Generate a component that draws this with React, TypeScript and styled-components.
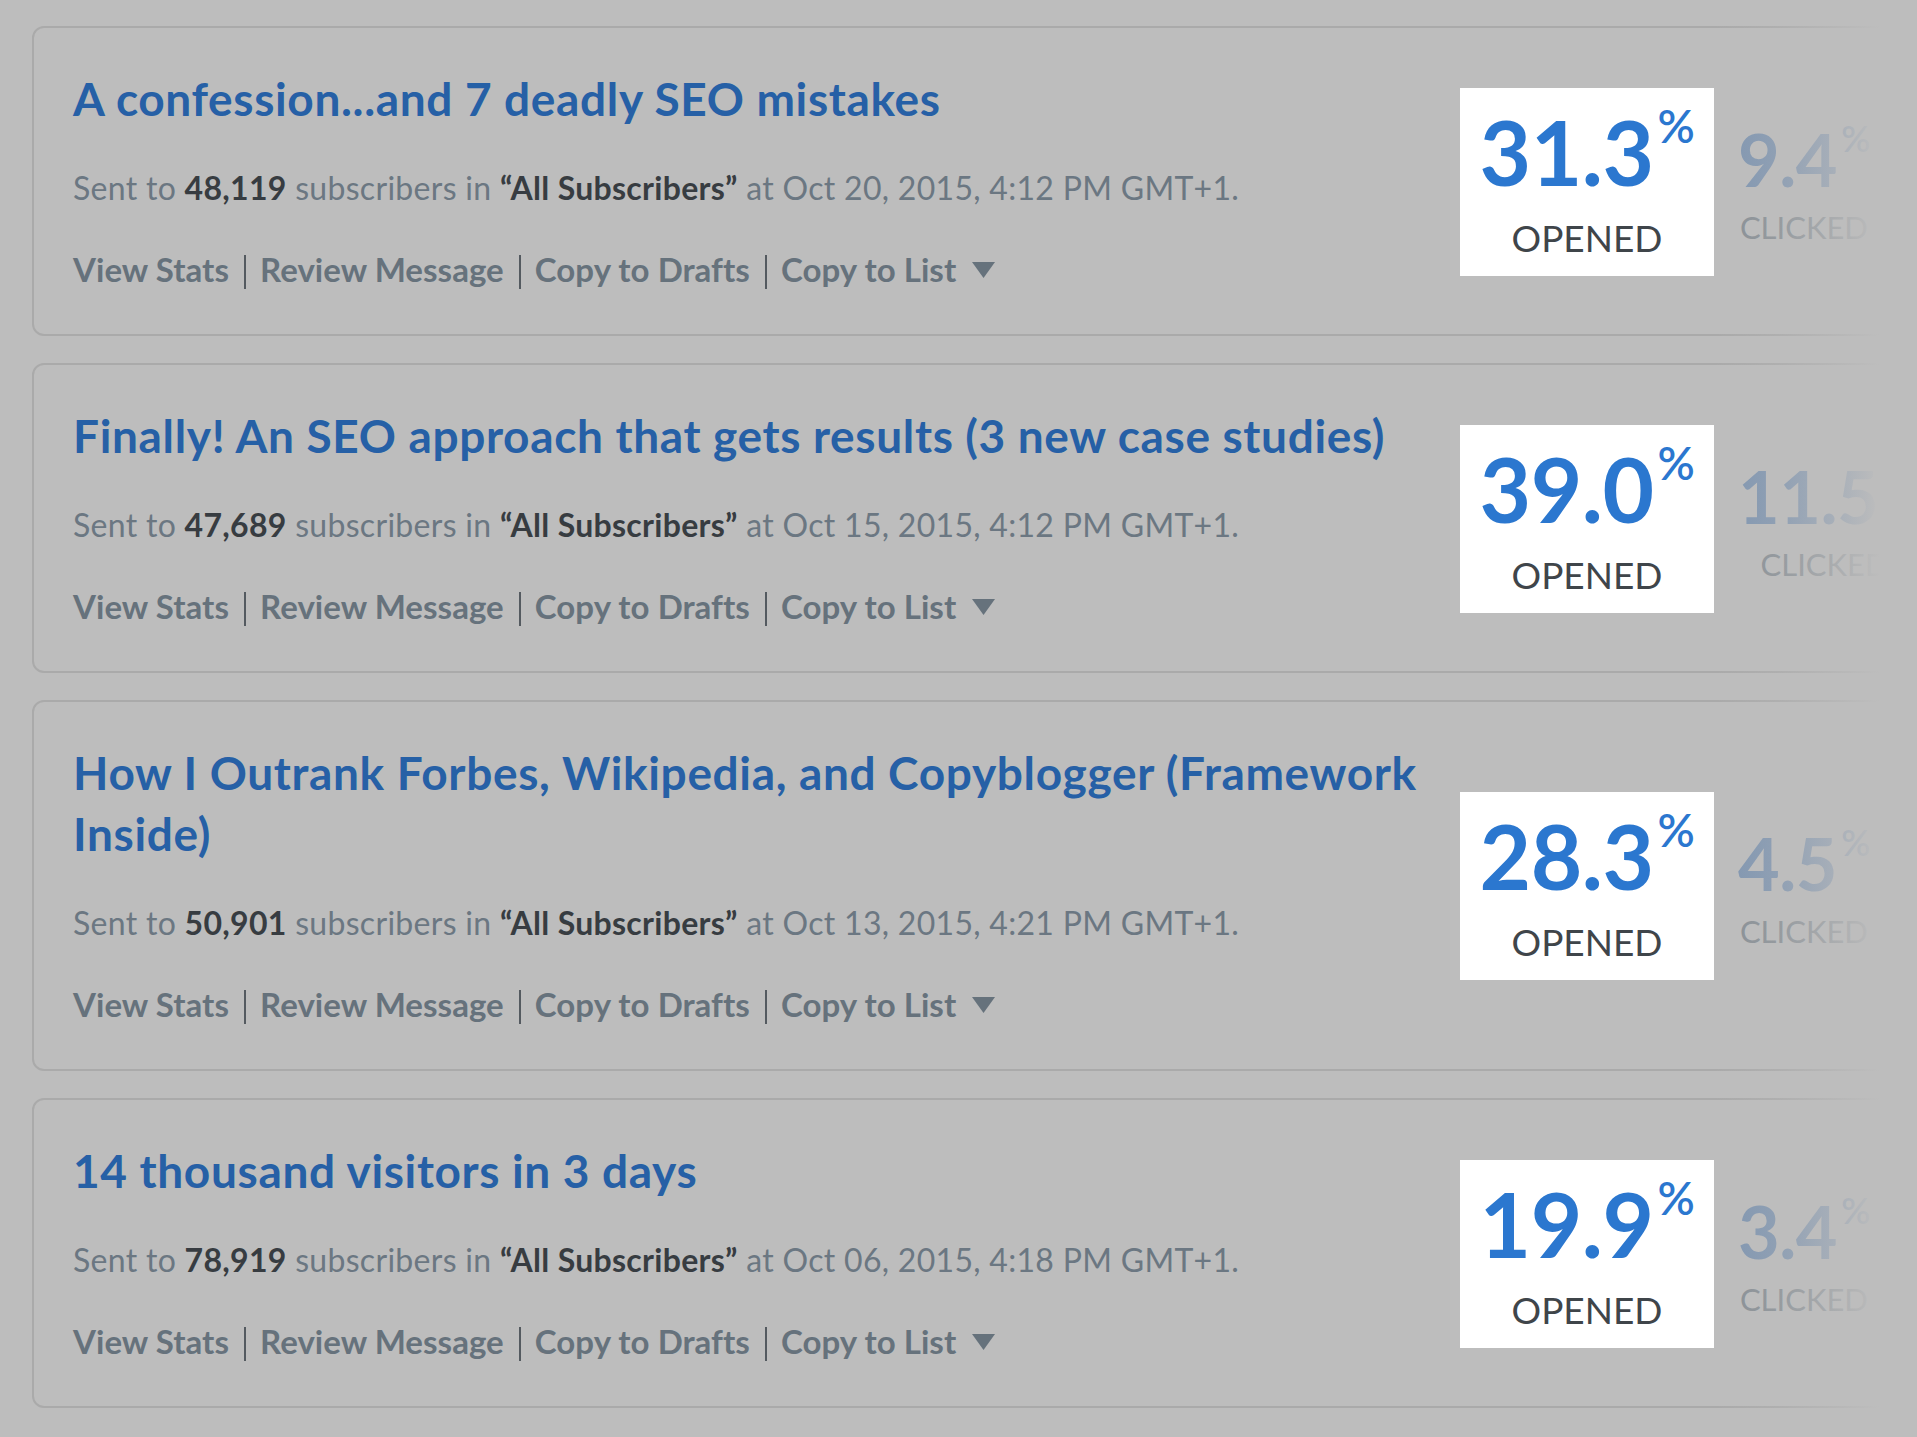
import React from "react";
import styled, { createGlobalStyle } from "styled-components";

const BG = "#bdbdbd";
const FONT = `"Lato", "Noto Sans", sans-serif`;

const GlobalStyle = createGlobalStyle`
  html, body {
    margin: 0;
    padding: 0;
    background: ${BG};
    overflow: hidden;
  }
  body {
    font-family: ${FONT};
  }
`;

const Page = styled.div`
  position: relative;
  width: 100%;
  min-height: 1437px;
  overflow: hidden;
  background: ${BG};
`;

const List = styled.div`
  display: flex;
  flex-direction: column;
  gap: 27px;
  padding: 26px 0 0 32px;
  width: 1900px;
`;

const Card = styled.div`
  display: flex;
  align-items: center;
  border: 2px solid #aaaaaa;
  border-radius: 12px;
  padding: 40px 0 45px 39px;
`;

const Main = styled.div`
  flex: 0 0 1372px;
  display: flex;
  flex-direction: column;
`;

const Title = styled.a`
  font-size: 46px;
  line-height: 61px;
  font-weight: 700;
  color: #2660a6;
  text-decoration: none;
  letter-spacing: 0.65px;
`;

const Meta = styled.div`
  margin-top: 39px;
  font-size: 32px;
  line-height: 40px;
  color: #6b7782;
  letter-spacing: 0.3px;

  b {
    font-weight: 700;
    color: #373c41;
  }
`;

const Actions = styled.div`
  margin-top: 41px;
  display: flex;
  align-items: center;
  font-size: 33px;
  line-height: 40px;
  font-weight: 700;
  color: #66727c;
  letter-spacing: 0.05px;
`;

const Action = styled.span`
  white-space: nowrap;
`;

const Sep = styled.span`
  display: inline-block;
  width: 2px;
  height: 34px;
  margin: 6px 14px 0 15px;
  background: #545a60;
`;

const Caret = styled.svg`
  margin-left: 16px;
  margin-top: 2px;
`;

const Stats = styled.div`
  display: flex;
  align-items: flex-start;
  margin: 6px 0 0 15px;
`;

const OpenedBox = styled.div`
  width: 254px;
  height: 188px;
  box-sizing: border-box;
  padding-top: 19px;
  background: #ffffff;
  display: flex;
  flex-direction: column;
  align-items: center;
`;

const BigNum = styled.div<{ $size: number; $color: string }>`
  font-size: ${(p) => p.$size}px;
  line-height: 1;
  font-weight: 700;
  color: ${(p) => p.$color};
  white-space: nowrap;
  letter-spacing: -0.5px;
`;

const Pct = styled.sup<{ $size: number }>`
  font-size: ${(p) => p.$size}px;
  font-weight: 600;
  vertical-align: top;
  position: relative;
  top: -0.08em;
  margin-left: 4px;
`;

const Label = styled.div<{ $size: number; $color: string; $gap: number }>`
  margin-top: ${(p) => p.$gap}px;
  font-size: ${(p) => p.$size}px;
  line-height: 1;
  font-weight: 400;
  letter-spacing: 0;
  color: ${(p) => p.$color};
`;

const ClickedBox = styled.div`
  margin-left: 24px;
  padding-top: 35px;
  display: flex;
  flex-direction: column;
  align-items: center;
`;

const Fade = styled.div`
  position: absolute;
  top: 0;
  bottom: 0;
  left: 1715px;
  right: 0;
  pointer-events: none;
  background: linear-gradient(
    to right,
    rgba(189, 189, 189, 0) 0px,
    rgba(189, 189, 189, 0.25) 60px,
    rgba(189, 189, 189, 0.65) 120px,
    ${BG} 165px
  );
`;

type Campaign = {
  title: string;
  count: string;
  date: string;
  opened: string;
  clicked: string;
};

const campaigns: Campaign[] = [
  {
    title: "A confession...and 7 deadly SEO mistakes",
    count: "48,119",
    date: "Oct 20, 2015, 4:12 PM GMT+1.",
    opened: "31.3",
    clicked: "9.4",
  },
  {
    title: "Finally! An SEO approach that gets results (3 new case studies)",
    count: "47,689",
    date: "Oct 15, 2015, 4:12 PM GMT+1.",
    opened: "39.0",
    clicked: "11.5",
  },
  {
    title: "How I Outrank Forbes, Wikipedia, and Copyblogger (Framework Inside)",
    count: "50,901",
    date: "Oct 13, 2015, 4:21 PM GMT+1.",
    opened: "28.3",
    clicked: "4.5",
  },
  {
    title: "14 thousand visitors in 3 days",
    count: "78,919",
    date: "Oct 06, 2015, 4:18 PM GMT+1.",
    opened: "19.9",
    clicked: "3.4",
  },
];

const CampaignCard: React.FC<{ c: Campaign }> = ({ c }) => (
  <Card>
    <Main>
      <Title href="#">{c.title}</Title>
      <Meta>
        Sent to <b>{c.count}</b> subscribers in <b>“All Subscribers”</b> at{" "}
        {c.date}
      </Meta>
      <Actions>
        <Action>View Stats</Action>
        <Sep />
        <Action>Review Message</Action>
        <Sep />
        <Action>Copy to Drafts</Action>
        <Sep />
        <Action>Copy to List</Action>
        <Caret width="23" height="16" viewBox="0 0 23 16">
          <polygon points="0,0 23,0 11.5,16" fill="#66727c" />
        </Caret>
      </Actions>
    </Main>
    <Stats>
      <OpenedBox>
        <BigNum $size={89} $color="#2b77cf">
          {c.opened}
          <Pct $size={46}>%</Pct>
        </BigNum>
        <Label $size={37} $color="#3f454a" $gap={23}>
          OPENED
        </Label>
      </OpenedBox>
      <ClickedBox>
        <BigNum $size={72} $color="#7f95b0">
          {c.clicked}
          <Pct $size={36}>%</Pct>
        </BigNum>
        <Label $size={31} $color="#878e94" $gap={17}>
          CLICKED
        </Label>
      </ClickedBox>
    </Stats>
  </Card>
);

const App: React.FC = () => {
  return (
    <>
      <GlobalStyle />
      <Page>
        <List>
          {campaigns.map((c) => (
            <CampaignCard key={c.title} c={c} />
          ))}
        </List>
        <Fade />
      </Page>
    </>
  );
};

export default App;
